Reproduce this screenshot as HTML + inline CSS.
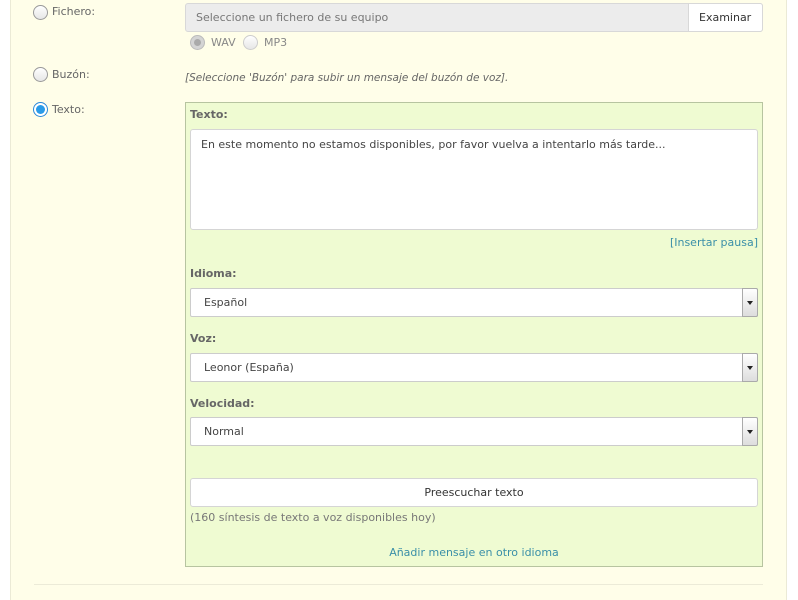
<!DOCTYPE html>
<html style="width:798px;height:600px;overflow:hidden"><head><meta charset="utf-8"><style>
*{box-sizing:border-box;margin:0;padding:0}
body{width:798px;height:600px;background:#fff;font-family:"DejaVu Sans","Liberation Sans",sans-serif;font-size:11px;color:#555;position:relative;overflow:hidden}
.a{position:absolute}
.panel{left:10px;top:-2px;width:777px;height:602px;background:#fffee9;border:1px solid #ebead6;border-bottom:none}
.radio{width:15px;height:15px;border-radius:50%;border:1px solid #999;background:linear-gradient(#fff,#e6e6e6)}
.lbl{font-size:11px;color:#666}
.green{left:185px;top:102px;width:578px;height:465px;background:#effbd2;border:1px solid #b7c4a0}
.box{background:#fff;border:1px solid #d5d5d5;border-radius:3px}
.sel{left:190px;width:568px;height:29px;background:#fff;border:1px solid #ccc;border-radius:2px;color:#444;padding:7px 13px}
.arr{position:absolute;right:-1px;top:-1px;width:16px;height:29px;border:1px solid #aaa;border-radius:0 2px 2px 0;background:linear-gradient(#fff,#ddd);}
.arr:after{content:"";position:absolute;left:4px;top:12px;border-left:3px solid transparent;border-right:3px solid transparent;border-top:4px solid #222}
.bl{font-weight:bold;color:#666;font-size:11px}
</style></head><body>
<div class="a panel"></div>
<div class="a radio" style="left:33px;top:5px"></div><div class="a lbl" style="left:52px;top:5px">Fichero:</div>
<div class="a" style="left:185px;top:3px;width:578px;height:29px;background:#ececec;border:1px solid #d8d8d8;border-radius:3px;padding:7px 10px;color:#777">Seleccione un fichero de su equipo</div>
<div class="a" style="left:688px;top:3px;width:75px;height:29px;background:#fff;border:1px solid #d8d8d8;border-radius:0 3px 3px 0;padding:7px 10px;color:#333">Examinar</div>
<div class="a radio" style="left:190px;top:35px;background:#d4d4d4;border-color:#bbb"><div style="margin:3px;width:7px;height:7px;border-radius:50%;background:#aaa"></div></div>
<div class="a lbl" style="left:211px;top:36px;color:#888">WAV</div>
<div class="a radio" style="left:243px;top:35px;border-color:#ccc"></div>
<div class="a lbl" style="left:264px;top:36px;color:#888">MP3</div>
<div class="a radio" style="left:33px;top:67px"></div><div class="a lbl" style="left:52px;top:68px">Buzón:</div>
<div class="a" style="left:185px;top:72px;font-style:italic;color:#666;font-size:10.5px">[Seleccione 'Buzón' para subir un mensaje del buzón de voz].</div>
<div class="a radio" style="left:33px;top:102px;border-color:#2a88d8;background:#fff"><div style="margin:2px;width:9px;height:9px;border-radius:50%;background:#2a9be8"></div></div>
<div class="a lbl" style="left:52px;top:103px">Texto:</div>
<div class="a green"></div>
<div class="a bl" style="left:190px;top:108px">Texto:</div>
<div class="a box" style="left:190px;top:129px;width:568px;height:101px;padding:8px 10px;color:#444">En este momento no estamos disponibles, por favor vuelva a intentarlo más tarde...</div>
<div class="a" style="left:600px;width:158px;text-align:right;top:236px;color:#3a8fa8">[Insertar pausa]</div>
<div class="a bl" style="left:190px;top:267px">Idioma:</div>
<div class="a sel" style="top:288px">Español<div class="arr"></div></div>
<div class="a bl" style="left:190px;top:332px">Voz:</div>
<div class="a sel" style="top:353px">Leonor (España)<div class="arr"></div></div>
<div class="a bl" style="left:190px;top:397px">Velocidad:</div>
<div class="a sel" style="top:417px">Normal<div class="arr"></div></div>
<div class="a box" style="left:190px;top:478px;width:568px;height:29px;text-align:center;padding-top:7px;color:#333">Preescuchar texto</div>
<div class="a" style="left:190px;top:511px;color:#777">(160 síntesis de texto a voz disponibles hoy)</div>
<div class="a" style="left:185px;top:546px;width:578px;text-align:center;color:#3a8fa8">Añadir mensaje en otro idioma</div>
<div class="a" style="left:34px;top:584px;width:729px;height:1px;background:#ecebd8"></div>
</body></html>
